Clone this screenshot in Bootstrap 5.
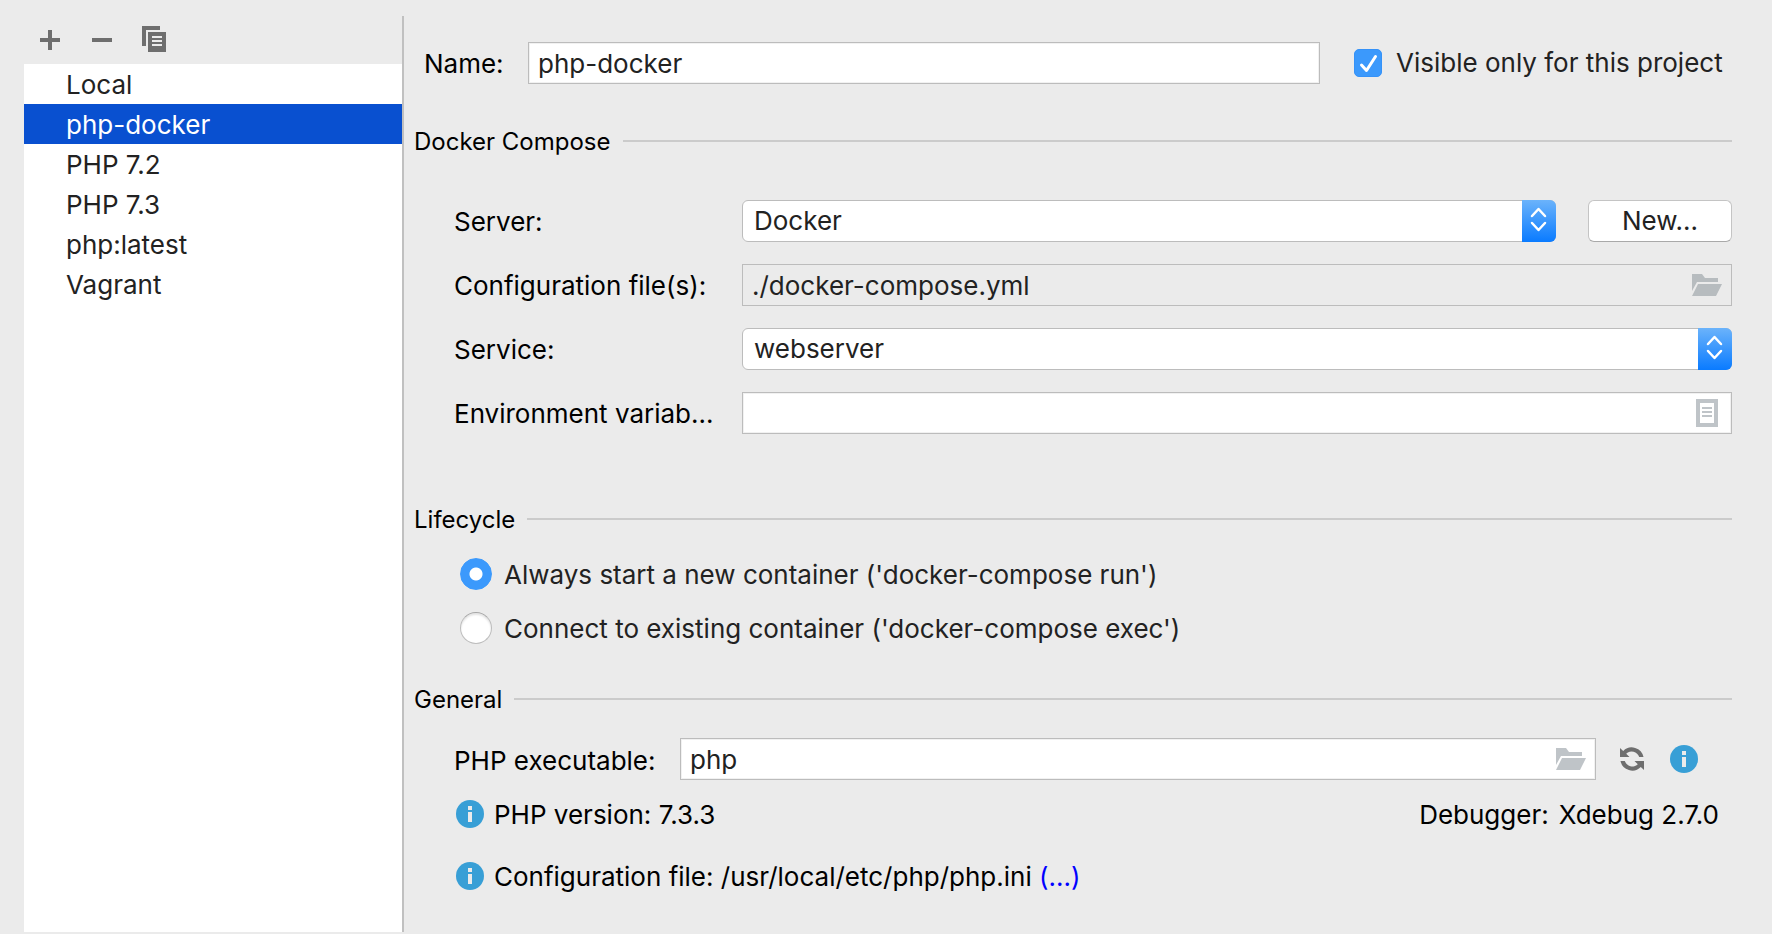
<!DOCTYPE html>
<html lang="en">
<head>
<meta charset="utf-8">
<meta name="viewport" content="width=device-width, initial-scale=1">
<title>CLI Interpreters</title>
<link href="https://cdn.jsdelivr.net/npm/bootstrap@5.3.0/dist/css/bootstrap.min.css" rel="stylesheet">
<style>
  body { background: #ebebeb; color: #000; font-family: Inter, "Liberation Sans", sans-serif; font-size: 26px; line-height: 32px; }
  svg { display: block; }
  .window { padding: 16px 0 2px 24px; }
  .sidebar { width: 380px; border-right: 2px solid #c0c0c0; }
  .toolbar { height: 48px; padding: 0 0 4px 16px; gap: 32px; }
  .tool { border: 0; background: none; padding: 0; }
  .interpreters { background: #fff; }
  .interpreters .list-group-item { border: 0; padding: 5px 0 3px 42px; color: #222; background: none; }
  .interpreters .list-group-item.active { background: #0950d0; color: #fff; }
  .settings { padding: 26px 40px 16px 10px; min-width: 0; }
  .name-row { padding-left: 10px; }
  .section-title { height: 32px; font-size: 24px; line-height: 32px; font-weight: 400; gap: 12px; white-space: nowrap; }
  .section-title span { padding-top: 1px; }
  .section-title::after { content: ""; flex: 1; height: 2px; background: #cbcbcb; }
  .section-compose { margin: 41px 0 43px; }
  .section-lifecycle { margin: 69px 0 23px; }
  .section-general { margin: 39px 0 23px; }
  .fields { padding-left: 40px; gap: 22px; }
  .field-label { width: 288px; padding-top: 1px; white-space: nowrap; }
  .name-label { width: 104px; padding-top: 1px; }
  .exec-label { width: 226px; padding-top: 3px; }
  .field, .picker { width: 100%; height: 42px; line-height: 32px; color: #222; border: 1px solid #bcbcbc; border-radius: 0; background: #fff; display: block; }
  .field { padding: 4px 48px 4px 9px; box-shadow: inset 0 0 0 1px #f1f1f1; }
  .field[readonly] { background: #ebebeb; box-shadow: none; }
  .picker { appearance: none; border-radius: 6px; padding: 4px 40px 4px 11px; }
  .picker-arrows { width: 34px; height: 42px; border-radius: 0 6px 6px 0; background: linear-gradient(#6bb3fb, #0a7bff); pointer-events: none; }
  .field-icon { right: 10px; top: 0; height: 42px; border: 0; background: none; padding: 0; }
  .new-btn { width: 144px; height: 42px; margin-left: 32px; padding: 4px 0; border: 1px solid #c4c4c4; border-bottom-color: #a9a9a9; border-radius: 6px; background: #fff; color: #222; font-size: 26px; line-height: 32px; }
  .new-btn:hover { background: #f5f5f5; color: #222; border-color: #b0b0b0; }
  .tick { appearance: none; width: 28px; height: 28px; margin: 0; border-radius: 5px; border: 1px solid #b8b8b8; background: #fff; }
  .tick:checked { border-color: #3592f8; background: #3b99fc url("data:image/svg+xml,%3Csvg xmlns='http://www.w3.org/2000/svg' viewBox='0 0 26 26'%3E%3Cpath d='M6.500 15l5 5.500L20.500 6.500' fill='none' stroke='white' stroke-width='3' stroke-linecap='round' stroke-linejoin='round'/%3E%3C/svg%3E") center/100% no-repeat; }
  .dot { appearance: none; width: 32px; height: 32px; margin: 0; border-radius: 50%; border: 1px solid #bdbdbd; border-top-color: #a5a5a5; background: #fff; box-shadow: inset 0 2px 2px #e4e4e4; }
  .dot:checked { border-color: #3b99fc; background: radial-gradient(circle, #fff 6px, #3b99fc 7px); box-shadow: none; }
  .choices { padding-left: 46px; gap: 22px; color: #222; }
  .choice { gap: 12px; height: 32px; }
  .choice label, .info-row span { padding-top: 2px; }
  .visible-check { width: 378px; margin-left: 34px; gap: 14px; color: #222; white-space: nowrap; }
  .reload { margin: 0 26px 0 24px; }
  .exec-info { margin-right: 34px; }
  .info-row { height: 28px; gap: 10px; padding-left: 2px; }
  .details { padding-left: 40px; }
  .version-row { margin-top: 20px; padding-right: 13px; }
  .config-row { margin-top: 34px; }
  .more { color: #00f; text-decoration: none; }
</style>
</head>
<body>
<svg width="0" height="0" class="position-absolute" aria-hidden="true">
  <defs>
    <symbol id="folder" viewBox="0 0 30 22"><path d="M0 0h10l3 4h13v4H5L0 17zM6 10h24l-6 12H0z" fill="currentColor"/></symbol>
    <symbol id="info" viewBox="0 0 28 28"><circle cx="14" cy="14" r="14" fill="#389fd6"/><path d="M12 6h4v4h-4zM12 12h4v10h-4z" fill="#ebebeb"/></symbol>
    <symbol id="updown" viewBox="0 0 34 42"><path d="M10 16l6.500-7 6.500 7M10 23l6.500 7 6.500-7" fill="none" stroke="#fff" stroke-width="2.500" stroke-linecap="round" stroke-linejoin="round"/></symbol>
  </defs>
</svg>

<div class="window d-flex min-vh-100">
  <aside class="sidebar d-flex flex-column flex-shrink-0">
    <div class="toolbar d-flex align-items-center">
      <button type="button" class="tool" aria-label="Add"><svg width="20" height="38" viewBox="0 0 20 38" fill="#6e6e6e"><path d="M8 11h4v8h8v4h-8v8H8v-8H0v-4h8z"/></svg></button>
      <button type="button" class="tool" aria-label="Remove"><svg width="20" height="38" viewBox="0 0 20 38"><path d="M0 19h20v4H0z" fill="#6e6e6e"/></svg></button>
      <button type="button" class="tool" aria-label="Copy"><svg width="24" height="38" viewBox="2 0 24 38" overflow="visible"><path d="M0 7h18v4H4v16H0z" fill="#6e6e6e"/><path d="M6 13h18v20H6z" fill="#6e6e6e"/><path d="M10 18h10M10 22h10M10 26h10" stroke="#ebebeb" stroke-width="2"/></svg></button>
    </div>
    <div class="interpreters list-group list-group-flush flex-grow-1">
      <a href="#" class="list-group-item mt-0">Local</a>
      <a href="#" class="list-group-item mt-0 active" aria-current="true">php-docker</a>
      <a href="#" class="list-group-item mt-0">PHP 7.2</a>
      <a href="#" class="list-group-item mt-0">PHP 7.3</a>
      <a href="#" class="list-group-item mt-0">php:latest</a>
      <a href="#" class="list-group-item mt-0">Vagrant</a>
    </div>
  </aside>

  <main class="settings flex-grow-1">
    <div class="name-row d-flex align-items-center">
      <label class="name-label flex-shrink-0" for="name">Name:</label>
      <input class="field flex-grow-1" id="name" type="text" value="php-docker">
      <div class="visible-check d-flex align-items-center flex-shrink-0">
        <input class="tick" type="checkbox" id="visible" checked>
        <label for="visible">Visible only for this project</label>
      </div>
    </div>

    <h2 class="section-title section-compose d-flex align-items-center"><span>Docker Compose</span></h2>
    <div class="fields d-flex flex-column">
      <div class="d-flex align-items-center">
        <label class="field-label flex-shrink-0" for="server">Server:</label>
        <div class="position-relative flex-grow-1">
          <select class="picker" id="server"><option>Docker</option></select>
          <span class="picker-arrows position-absolute top-0 end-0"><svg width="34" height="42"><use href="#updown"/></svg></span>
        </div>
        <button type="button" class="btn new-btn flex-shrink-0">New...</button>
      </div>
      <div class="d-flex align-items-center">
        <label class="field-label flex-shrink-0" for="files">Configuration file(s):</label>
        <div class="position-relative flex-grow-1">
          <input class="field" id="files" type="text" value="./docker-compose.yml" readonly>
          <button type="button" class="field-icon position-absolute" aria-label="Browse" style="color:#b7bcbf"><svg width="30" height="22"><use href="#folder"/></svg></button>
        </div>
      </div>
      <div class="d-flex align-items-center">
        <label class="field-label flex-shrink-0" for="service">Service:</label>
        <div class="position-relative flex-grow-1">
          <select class="picker" id="service"><option>webserver</option></select>
          <span class="picker-arrows position-absolute top-0 end-0"><svg width="34" height="42"><use href="#updown"/></svg></span>
        </div>
      </div>
      <div class="d-flex align-items-center">
        <label class="field-label flex-shrink-0" for="env">Environment variab...</label>
        <div class="position-relative flex-grow-1">
          <input class="field" id="env" type="text">
          <button type="button" class="field-icon position-absolute" aria-label="Edit variables"><svg width="26" height="28" viewBox="0 0 26 28"><path d="M2 2h18v24H2z" fill="none" stroke="#bfc4c8" stroke-width="4"/><path d="M6 9h10M6 13h10M6 17h10" stroke="#bfc4c8" stroke-width="2"/></svg></button>
        </div>
      </div>
    </div>

    <h2 class="section-title section-lifecycle d-flex align-items-center"><span>Lifecycle</span></h2>
    <div class="choices d-flex flex-column">
      <div class="choice d-flex align-items-center">
        <input class="dot" type="radio" name="lifecycle" id="run" checked>
        <label for="run">Always start a new container ('docker-compose run')</label>
      </div>
      <div class="choice d-flex align-items-center">
        <input class="dot" type="radio" name="lifecycle" id="exec">
        <label for="exec">Connect to existing container ('docker-compose exec')</label>
      </div>
    </div>

    <h2 class="section-title section-general d-flex align-items-center"><span>General</span></h2>
    <div class="details">
      <div class="d-flex align-items-center">
        <label class="exec-label flex-shrink-0" for="executable">PHP executable:</label>
        <div class="position-relative flex-grow-1">
          <input class="field" id="executable" type="text" value="php">
          <button type="button" class="field-icon position-absolute" aria-label="Browse" style="color:#bfc4c8"><svg width="30" height="22"><use href="#folder"/></svg></button>
        </div>
        <button type="button" class="tool reload" aria-label="Reload"><svg width="24" height="24" viewBox="0 0 24 24"><path id="half" d="M0 1L3.200 4A12 12 0 0 1 23.500 10H19.200A8 8 0 0 0 6.200 6.700L9.500 10H0z" fill="#6e6e6e"/><use href="#half" transform="rotate(180 12 12)"/></svg></button>
        <button type="button" class="tool exec-info" aria-label="Information"><svg width="28" height="28"><use href="#info"/></svg></button>
      </div>
      <div class="info-row version-row d-flex align-items-center">
        <svg width="28" height="28" aria-hidden="true"><use href="#info"/></svg>
        <span>PHP version: 7.3.3</span>
        <span class="ms-auto">Debugger:</span>
        <span>Xdebug 2.7.0</span>
      </div>
      <div class="info-row config-row d-flex align-items-center">
        <svg width="28" height="28" aria-hidden="true"><use href="#info"/></svg>
        <span>Configuration file: /usr/local/etc/php/php.ini <a class="more" href="#">(...)</a></span>
      </div>
    </div>
  </main>
</div>
<script src="https://cdn.jsdelivr.net/npm/bootstrap@5.3.0/dist/js/bootstrap.bundle.min.js"></script>
</body>
</html>
